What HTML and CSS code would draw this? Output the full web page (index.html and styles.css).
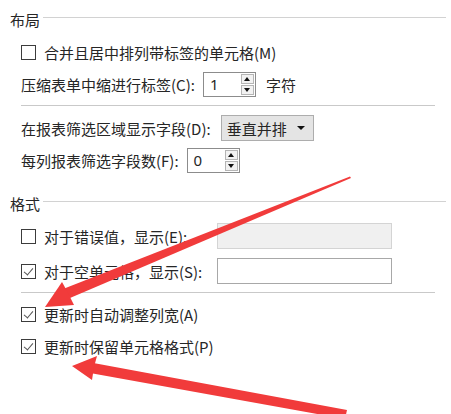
FILE: index.html
```html
<!DOCTYPE html>
<html lang="zh-CN">

<head>
    <meta charset="UTF-8">
    <meta name="viewport" content="width=device-width, initial-scale=1.0">
    <title>数据透视表选项</title>
    <link rel="stylesheet" href="styles.css">
</head>

<body>
    <div class="page">
        <div class="group-title">布局</div>

        <label class="row row-first">
            <span class="check"></span>
            <span>合并且居中排列带标签的单元格(M)</span>
        </label>

        <div class="row">
            <span>压缩表单中缩进行标签(C):</span>
            <span class="spin">
                <span class="spin-value">1</span>
                <span class="spin-btns">
                    <span class="spin-btn up"></span>
                    <span class="spin-btn down"></span>
                </span>
            </span>
            <span class="unit">字符</span>
        </div>

        <div class="divider"></div>

        <div class="row row-after-divider">
            <span>在报表筛选区域显示字段(D):</span>
            <span class="dropdown">
                <span>垂直并排</span>
                <span class="caret"></span>
            </span>
        </div>

        <div class="row">
            <span>每列报表筛选字段数(F):</span>
            <span class="spin">
                <span class="spin-value">0</span>
                <span class="spin-btns">
                    <span class="spin-btn up"></span>
                    <span class="spin-btn down"></span>
                </span>
            </span>
        </div>

        <div class="group-title group-second">格式</div>

        <div class="row row-first field-row">
            <label class="field-label">
                <span class="check"></span>
                <span>对于错误值，显示(E):</span>
            </label>
            <span class="textbox disabled"></span>
        </div>

        <div class="row field-row row-gap">
            <label class="field-label">
                <span class="check checked"></span>
                <span>对于空单元格，显示(S):</span>
            </label>
            <span class="textbox"></span>
        </div>

        <div class="divider"></div>

        <label class="row row-after-divider row-short">
            <span class="check checked"></span>
            <span>更新时自动调整列宽(A)</span>
        </label>

        <label class="row">
            <span class="check checked"></span>
            <span>更新时保留单元格格式(P)</span>
        </label>
    </div>

    <!-- red annotation arrows drawn over the dialog -->
    <svg class="arrows" width="451" height="414" viewBox="0 0 451 414">
        <polygon points="350,176.5 351,178 70,298 63,289" />
        <polygon points="45,307 62,282 67,291 74,305" />
        <polygon points="88,362 90,373 345,419 347,410" />
        <polygon points="72,366 97,356 94,367 92,380" />
    </svg>
</body>

</html>
```

FILE: styles.css
```css
* {
    box-sizing: border-box;
    margin: 0;
    padding: 0;
}

body {
    font-family: "Noto Sans CJK SC", "Noto Sans", sans-serif;
    font-size: 15px;
    color: #262626;
    background-color: #fff;
    width: 451px;
    height: 414px;
    overflow: hidden;
    position: relative;
}

.page {
    display: flex;
    flex-direction: column;
    padding-top: 3px;
}

.group-title {
    display: flex;
    align-items: center;
    height: 32px;
    padding-left: 10px;
}

.group-title::after {
    content: "";
    flex: 1;
    height: 1px;
    margin: 0 5px 4px 3px;
    background-color: #d2d2d2;
}

.group-second {
    margin-top: 11px;
}

.row {
    display: flex;
    align-items: center;
    gap: 8px;
    height: 32px;
    padding-left: 21px;
}

.row-first {
    margin-top: 1px;
}

.row-gap {
    margin-top: 3px;
}

.row-after-divider {
    margin-top: 6px;
}

.row-short {
    height: 31px;
}

.divider {
    height: 1px;
    margin: 5px 16px 0 21px;
    background-color: #c9c9c9;
}

.check {
    width: 15px;
    height: 15px;
    border: 1px solid #3c3c3c;
    background-color: #fff;
    flex-shrink: 0;
    position: relative;
}

.check.checked::after {
    content: "";
    position: absolute;
    left: 4px;
    top: 1px;
    width: 4px;
    height: 8px;
    border: solid #555;
    border-width: 0 1px 1px 0;
    transform: rotate(40deg);
}

.spin {
    display: flex;
    align-items: center;
    width: 53px;
    height: 25px;
    border: 1px solid #8c8c8c;
    background-color: #fff;
}

.spin-value {
    flex: 1;
    padding-left: 6px;
    font-family: "Noto Sans", sans-serif;
}

.spin-btns {
    display: flex;
    flex-direction: column;
    gap: 1px;
    width: 13px;
    margin-right: 1px;
}

.spin-btn {
    height: 10px;
    border: 1px solid #b5b5b5;
    background-color: #f2f2f2;
    position: relative;
}

.spin-btn::after {
    content: "";
    position: absolute;
    left: 2px;
    width: 0;
    height: 0;
    border-left: 3.5px solid transparent;
    border-right: 3.5px solid transparent;
}

.spin-btn.up::after {
    top: 2px;
    border-bottom: 4px solid #111;
}

.spin-btn.down::after {
    top: 2px;
    border-top: 4px solid #111;
}

.unit {
    margin-left: 2px;
}

.dropdown {
    display: flex;
    align-items: center;
    justify-content: space-between;
    width: 93px;
    height: 26px;
    margin-left: 2px;
    padding: 0 8px 0 5px;
    border: 1px solid #adadad;
    background-color: #e4e4e4;
}

.caret {
    width: 0;
    height: 0;
    border-left: 4px solid transparent;
    border-right: 4px solid transparent;
    border-top: 4px solid #111;
}

.field-row {
    gap: 0;
}

.field-label {
    display: flex;
    align-items: center;
    gap: 8px;
    width: 196px;
}

.textbox {
    width: 175px;
    height: 26px;
    border: 1px solid #a8a8a8;
    background-color: #fff;
}

.textbox.disabled {
    border-color: #d4d4d4;
    background-color: #f0f0f0;
}

.arrows {
    position: absolute;
    left: 0;
    top: 0;
    pointer-events: none;
    fill: #f13b3b;
}
```
